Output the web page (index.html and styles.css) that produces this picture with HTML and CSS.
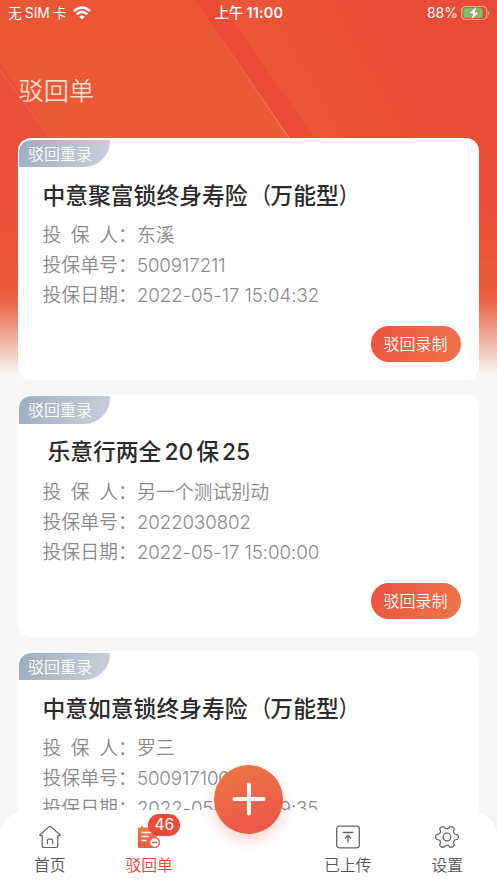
FILE: index.html
```html
<!DOCTYPE html>
<html lang="zh-CN">
<head>
<meta charset="utf-8">
<meta name="viewport" content="width=device-width, initial-scale=1">
<title>驳回单</title>
<link rel="stylesheet" href="styles.css">
</head>
<body>
<div class="screen">
  <svg class="backdrop" width="497" height="380" viewBox="0 0 497 380" preserveAspectRatio="none" aria-hidden="true">
    <defs>
      <linearGradient id="base" x1="0" y1="0" x2="0" y2="1"><stop offset="0" stop-color="#ec5535"/><stop offset=".4" stop-color="#ea5c39"/><stop offset="1" stop-color="#ea5838"/></linearGradient>
      <linearGradient id="right" x1="0" y1="1" x2="1" y2=".5"><stop offset="0" stop-color="#ed5a36"/><stop offset=".3" stop-color="#ec5736"/><stop offset="1" stop-color="#e94c36"/></linearGradient>
      <linearGradient id="sides" x1="0" y1="0" x2="0" y2="1"><stop offset="0" stop-color="#eb5138" stop-opacity="0"/><stop offset="1" stop-color="#ea5b39"/></linearGradient>
      <linearGradient id="line" x1="0" y1="0" x2="0" y2="1"><stop offset="0" stop-color="#f58c6b" stop-opacity="0"/><stop offset="1" stop-color="#f59a7a"/></linearGradient>
      <linearGradient id="fade" x1="0" y1="0" x2="0" y2="1"><stop offset="0" stop-color="#f7f7f7" stop-opacity="0"/><stop offset=".2" stop-color="#f7f7f7" stop-opacity=".08"/><stop offset=".5" stop-color="#f7f7f7" stop-opacity=".45"/><stop offset=".95" stop-color="#f7f7f7"/></linearGradient>
    </defs>
    <rect width="497" height="380" fill="url(#base)"/>
    <path d="M218 0H497V260H401Z" fill="url(#right)"/>
    <path d="M195 0H218L315 138H289Z" fill="#eb4b34"/>
    <path d="M195 0L289 138" stroke="url(#line)" stroke-width=".8"/>
    <path d="M0 62L52 138V300H0Z" fill="#eb5139"/>
    <path d="M0 70L51 139" stroke="#ee7052" stroke-width=".8"/>
    <rect y="170" width="497" height="130" fill="url(#sides)"/>
    <rect y="300" width="497" height="80" fill="#ea5b39"/>
    <rect y="284" width="497" height="96" fill="url(#fade)"/>
  </svg>

  <header class="status">
    <div class="carrier"><span>无<i class="thin-gap"></i>SIM<i class="thin-gap"></i>卡</span>
      <svg width="18" height="14" viewBox="0 0 18 14" fill="none" stroke="#fff" stroke-width="2.5"><path d="M1 5.1Q9-2.1 17 5.1"/><path d="M3.8 8.2Q9 3.6 14.2 8.2"/><path d="M9 13.5L6.2 10.7Q9 8.4 11.8 10.7Z" fill="#fff" stroke="none"/></svg>
    </div>
    <div class="clock">上午<i class="thin-gap"></i><b>11:00</b></div>
    <div class="battery"><span>88%</span>
      <svg width="29" height="16" viewBox="0 0 29 16"><rect x=".7" y="1.5" width="25" height="13" rx="3.8" fill="none" stroke="#f5ad9b" stroke-width="1.2"/><rect x="2.5" y="3.3" width="19" height="9.400" rx="2" fill="#62ce67"/><path d="M27 6v4.200q1.400-.4 1.400-2.100T27 6Z" fill="#f5ad9b"/><path d="M16 .7L7.400 8.800h4.300L9.700 15.400 18.800 7.200h-4.600Z" fill="#fff" stroke="#ec5138" stroke-width=".7"/></svg>
    </div>
  </header>
  <h1 class="heading">驳回单</h1>

  <main class="list">
    <article class="card">
      <span class="tag">驳回重录</span>
      <h2 class="title">中意聚富锁终身寿险<span class="paren open">（</span>万能型<span class="paren close">）</span></h2>
      <dl class="fields">
        <div class="row"><dt class="spread"><span>投</span><span>保</span><span>人：</span></dt><dd>东溪</dd></div>
        <div class="row"><dt>投保单号：</dt><dd class="number">500917211</dd></div>
        <div class="row"><dt>投保日期：</dt><dd class="number">2022-05-17 15:04:32</dd></div>
      </dl>
      <button class="record">驳回录制</button>
    </article>
    <article class="card">
      <span class="tag">驳回重录</span>
      <h2 class="title indented">乐意行两全<i class="thin-gap"></i>20<i class="thin-gap"></i>保<i class="thin-gap"></i>25</h2>
      <dl class="fields">
        <div class="row"><dt class="spread"><span>投</span><span>保</span><span>人：</span></dt><dd>另一个测试别动</dd></div>
        <div class="row"><dt>投保单号：</dt><dd class="number">2022030802</dd></div>
        <div class="row"><dt>投保日期：</dt><dd class="number">2022-05-17 15:00:00</dd></div>
      </dl>
      <button class="record">驳回录制</button>
    </article>
    <article class="card">
      <span class="tag">驳回重录</span>
      <h2 class="title">中意如意锁终身寿险<span class="paren open">（</span>万能型<span class="paren close">）</span></h2>
      <dl class="fields">
        <div class="row"><dt class="spread"><span>投</span><span>保</span><span>人：</span></dt><dd>罗三</dd></div>
        <div class="row"><dt>投保单号：</dt><dd class="number">500917100</dd></div>
        <div class="row"><dt>投保日期：</dt><dd class="number">2022-05-17 14:59:35</dd></div>
      </dl>
      <button class="record">驳回录制</button>
    </article>
  </main>

  <nav class="tabs">
    <a class="tab">
      <svg width="24" height="24" viewBox="0 0 24 24" fill="none" stroke="#666" stroke-width="1.2" stroke-linejoin="round" stroke-linecap="round"><path d="M4.200 10.700H2.300Q1.200 10.600 2 9.700L11 1.700q1-.8 2 0l9 8q.8.9-.3 1h-1.900v9.800q0 2-2 2H6.200q-2 0-2-2Z"/><path d="M9.400 18.600v-3.200q0-1.200 1.200-1.200h2.800q1.200 0 1.200 1.200v3.200"/></svg>
      <span>首页</span>
    </a>
    <a class="tab active">
      <svg width="24" height="24" viewBox="0 0 24 24" fill="none"><defs><linearGradient id="doc" x1="0" y1="0" x2="0" y2="1"><stop stop-color="#f07a4c"/><stop offset="1" stop-color="#eb5b45"/></linearGradient></defs><path d="M2 2.500h2V1h2v1.500h9V1h2v1.500h2q1 0 1 1v18q0 1.500-1.500 1.500h-16Q1 23 1 21.500v-18q0-1 1-1Z" fill="url(#doc)"/><path d="M4.500 7.500h13M4.500 11.500h7M4.500 15.500h5" stroke="#fff" stroke-width="1.300"/><circle cx="17.500" cy="17.500" r="4.900" fill="#fff" stroke="#ec6047" stroke-width="1.300"/><path d="M15 17.500h5" stroke="#ec6047" stroke-width="1.500"/></svg>
      <span>驳回单</span>
      <b class="badge">46</b>
    </a>
    <button class="add" aria-label="add">
      <svg width="34" height="34" viewBox="0 0 34 34" stroke="#fff" stroke-width="4" stroke-linecap="round"><path d="M17 2.500v29M2.500 17h29"/></svg>
    </button>
    <a class="tab">
      <svg width="24" height="24" viewBox="0 0 24 24" fill="none" stroke="#666" stroke-width="1.300" stroke-linecap="round" stroke-linejoin="round"><rect x=".7" y="1.200" width="22.600" height="21.600" rx="2.500"/><path d="M7.200 7.500h9.600M12 17v-6.500M9.300 13l2.700-2.700 2.700 2.700"/></svg>
      <span>已上传</span>
    </a>
    <a class="tab">
      <svg width="24" height="24" viewBox="-12 -12 24 24" fill="none" stroke="#666" stroke-width="1.250" stroke-linejoin="round">
        <defs><path id="tooth" d="M6.930-4Q7.750-2.600 9.300-2.600Q11.400-2.600 11.400 0Q11.400 2.600 9.300 2.600Q7.750 2.600 6.930 4"/></defs>
        <use href="#tooth"/><use href="#tooth" transform="rotate(60)"/><use href="#tooth" transform="rotate(120)"/><use href="#tooth" transform="rotate(180)"/><use href="#tooth" transform="rotate(240)"/><use href="#tooth" transform="rotate(300)"/>
        <circle r="3.900"/>
      </svg>
      <span>设置</span>
    </a>
  </nav>
</div>
</body>
</html>
```
FILE: styles.css
```css
* {
  box-sizing: border-box;
}

body {
  margin: 0;
  font-family: Inter, "Noto Sans CJK SC", sans-serif;
}

h1, h2, dl, dd {
  margin: 0;
}

button {
  border: 0;
  padding: 0;
  font-family: inherit;
}

.screen {
  position: relative;
  display: flex;
  flex-direction: column;
  width: 497px;
  height: 883px;
  overflow: hidden;
  background: #f7f7f7;
}

.backdrop {
  position: absolute;
  top: 0;
  left: 0;
}

.thin-gap {
  display: inline-block;
  width: 3px;
}

.status {
  position: relative;
  display: grid;
  grid-template-columns: 1fr auto 1fr;
  align-items: center;
  height: 26px;
  padding: 0 7px 0 8px;
  color: #fff;
  font-size: 14px;
  line-height: 26px;
}

.carrier, .battery {
  display: flex;
  align-items: center;
}

.carrier {
  gap: 6px;
  font-size: 13.8px;
}

.battery {
  justify-content: flex-end;
  gap: 3px;
  font-size: 14px;
}

.clock {
  font-size: 14.4px;
  font-weight: 500;
}

.clock b {
  font-weight: 600;
  letter-spacing: .2px;
}

.heading {
  position: relative;
  height: 112px;
  padding: 44px 0 0 18.5px;
  color: #fcdcc4;
  font-size: 25.2px;
  font-weight: 350;
  line-height: 42px;
}

.list {
  position: relative;
  display: flex;
  flex: 1;
  min-height: 0;
  flex-direction: column;
  gap: 14.7px;
  padding: 0 18px;
  overflow: hidden;
}

.card {
  display: flex;
  flex: none;
  flex-direction: column;
  align-items: flex-start;
  height: 242px;
  padding: 1.5px 18px 18px 1.4px;
  border-radius: 13px;
  background: #fff;
}

.tag {
  width: 91px;
  height: 27.5px;
  padding-left: 8.5px;
  border-radius: 12px 0 26px 0;
  background: linear-gradient(110deg, #9daec0, #c9d1dc);
  color: #fff;
  font-size: 16px;
  font-weight: 350;
  line-height: 28px;
}

.title {
  margin: 12.5px 0 9.5px 23px;
  color: #2b2b2b;
  font-size: 22.8px;
  font-weight: 500;
  line-height: 32px;
  white-space: nowrap;
}

.title.indented {
  margin-left: 28px;
}

.paren {
  display: inline-block;
  width: 22.8px;
  transform: scaleX(.82);
}

.paren.open {
  transform-origin: right;
}

.paren.close {
  transform-origin: left;
}

.fields {
  margin-left: 23px;
  color: #8a8a8a;
  font-size: 18.9px;
  font-weight: 350;
  line-height: 30px;
}

.row {
  display: flex;
}

dt {
  width: 94.5px;
  white-space: nowrap;
}

.spread {
  display: flex;
  gap: 9.5px;
}

dd {
  white-space: nowrap;
}

.number {
  font-size: 18.7px;
  font-weight: 350;
  letter-spacing: -.08px;
  line-height: 29px;
}

.record {
  width: 90px;
  height: 36px;
  margin-top: auto;
  margin-left: auto;
  border-radius: 18px;
  background: linear-gradient(100deg, #eb5341, #ef7449);
  color: #fff;
  font-size: 16px;
  font-weight: 350;
  line-height: 37px;
  text-indent: -1px;
}

.tabs {
  position: relative;
  display: grid;
  grid-template-columns: repeat(5, 1fr);
  height: 73px;
  background: linear-gradient(#fff, #fff) 18px 0 / 461px 100% no-repeat, #f4f5f7;
}

.tabs::before {
  position: absolute;
  inset: 2px 0 0;
  border-radius: 24px 24px 0 0;
  background: #fff;
  content: "";
}

.tab {
  position: relative;
  display: flex;
  flex-direction: column;
  align-items: center;
  gap: 5px;
  padding-top: 15px;
  color: #555;
  font-size: 15.8px;
  font-weight: 350;
  line-height: 24px;
}

.tab svg {
  display: block;
}

.tab.active {
  color: #ed4235;
}

.badge {
  position: absolute;
  top: 4px;
  left: 49px;
  width: 32px;
  height: 22px;
  border-radius: 11px;
  background: #e94b3b;
  color: #fff;
  font-size: 15.5px;
  font-weight: 400;
  line-height: 22px;
  text-align: center;
}

.add {
  position: relative;
  display: flex;
  align-items: center;
  justify-content: center;
  width: 69px;
  height: 69px;
  margin-top: -45px;
  justify-self: center;
  border-radius: 50%;
  background: linear-gradient(160deg, #ee7746, #ec5348);
  box-shadow: 0 7px 14px rgba(230, 90, 80, .25);
}

.add svg {
  margin-left: 2px;
  margin-top: -2px;
}
```
